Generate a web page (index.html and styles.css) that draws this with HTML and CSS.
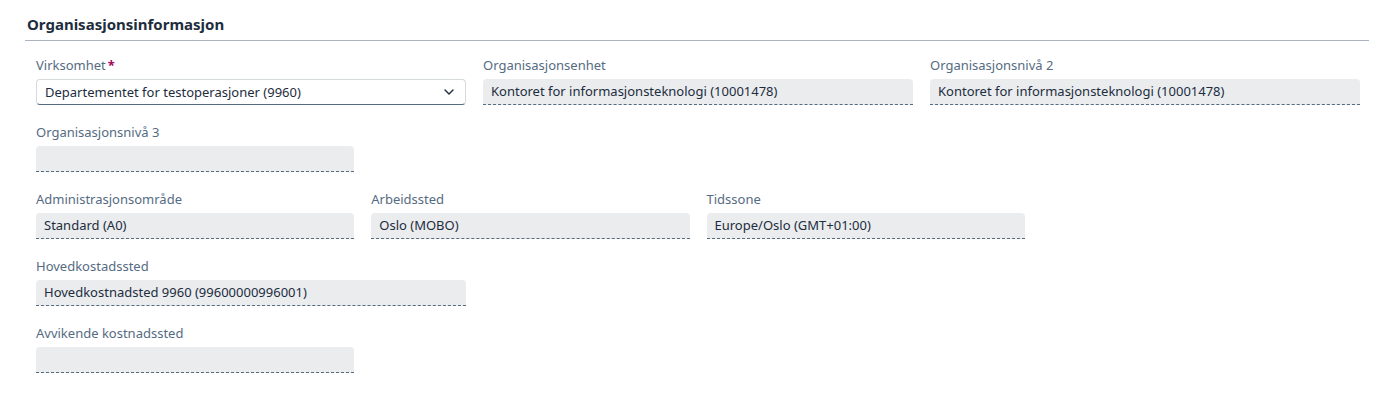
FILE: index.html
```html
<!DOCTYPE html>
<html lang="no">
<head>
<meta charset="utf-8">
<link rel="stylesheet" href="styles.css">
</head>
<body>
<section class="panel">
  <h2 class="title">Organisasjonsinformasjon</h2>
  <div class="form">
    <div class="row">
      <div class="field span4">
        <label class="label">Virksomhet<span class="req">*</span></label>
        <div class="select">
          <span class="value">Departementet for testoperasjoner (9960)</span>
          <svg class="chev" width="10" height="6" viewBox="0 0 10 6"><path d="M1 1 L5 5 L9 1" fill="none" stroke="#1d2d3e" stroke-width="1.4" stroke-linecap="round" stroke-linejoin="round"/></svg>
        </div>
      </div>
      <div class="field span4">
        <label class="label">Organisasjonsenhet</label>
        <div class="ro">Kontoret for informasjonsteknologi (10001478)</div>
      </div>
      <div class="field span4">
        <label class="label">Organisasjonsnivå 2</label>
        <div class="ro">Kontoret for informasjonsteknologi (10001478)</div>
      </div>
    </div>
    <div class="row">
      <div class="field span3">
        <label class="label">Organisasjonsnivå 3</label>
        <div class="ro"></div>
      </div>
    </div>
    <div class="row">
      <div class="field span3">
        <label class="label">Administrasjonsområde</label>
        <div class="ro">Standard (A0)</div>
      </div>
      <div class="field span3">
        <label class="label">Arbeidssted</label>
        <div class="ro">Oslo (MOBO)</div>
      </div>
      <div class="field span3">
        <label class="label">Tidssone</label>
        <div class="ro">Europe/Oslo (GMT+01:00)</div>
      </div>
    </div>
    <div class="row">
      <div class="field span4">
        <label class="label">Hovedkostadssted</label>
        <div class="ro">Hovedkostnadsted 9960 (99600000996001)</div>
      </div>
    </div>
    <div class="row">
      <div class="field span3">
        <label class="label">Avvikende kostnadssted</label>
        <div class="ro"></div>
      </div>
    </div>
  </div>
</section>
</body>
</html>
```
FILE: styles.css
```css
* { box-sizing: border-box; }
html, body { margin: 0; background: #ffffff; }
body {
  font-family: "Noto Sans", "Liberation Sans", sans-serif;
  color: #1d2d3e;
}
.panel {
  padding: 12px 17px 0 25px;
}
.title {
  margin: 0;
  font-size: 15px;
  font-weight: 700;
  line-height: 24px;
  padding: 0 0 4px 2px;
  border-bottom: 1px solid #a9b4be;
  color: #1d2d3e;
}
.form {
  padding: 12px 9px 0 11px;
}
.row {
  display: grid;
  grid-template-columns: repeat(12, 1fr);
  column-gap: 17px;
  margin-bottom: 15px;
}
.span4 { grid-column: span 4; }
.span3 { grid-column: span 3; }
.field {
  display: flex;
  flex-direction: column;
}
.label {
  font-size: 13px;
  line-height: 17px;
  color: #556b82;
  margin-top: 4px;
  margin-bottom: 5px;
}
.req { color: #a2085f; font-weight: 700; margin-left: 2px; }
.ro, .select {
  height: 26px;
  font-size: 13px;
  line-height: 24px;
  padding: 0 8px;
  white-space: nowrap;
  overflow: hidden;
}
.ro {
  background: #eaecee;
  border-radius: 4px 4px 0 0;
  border-bottom: 1px dashed #556b82;
  color: #1d2d3e;
}
.select {
  display: flex;
  align-items: center;
  justify-content: space-between;
  background: #ffffff;
  border: 1px solid #d5dadd;
  border-bottom-color: #556b82;
  border-radius: 4px;
  padding-right: 11px;
}
.chev { flex: none; }
```
